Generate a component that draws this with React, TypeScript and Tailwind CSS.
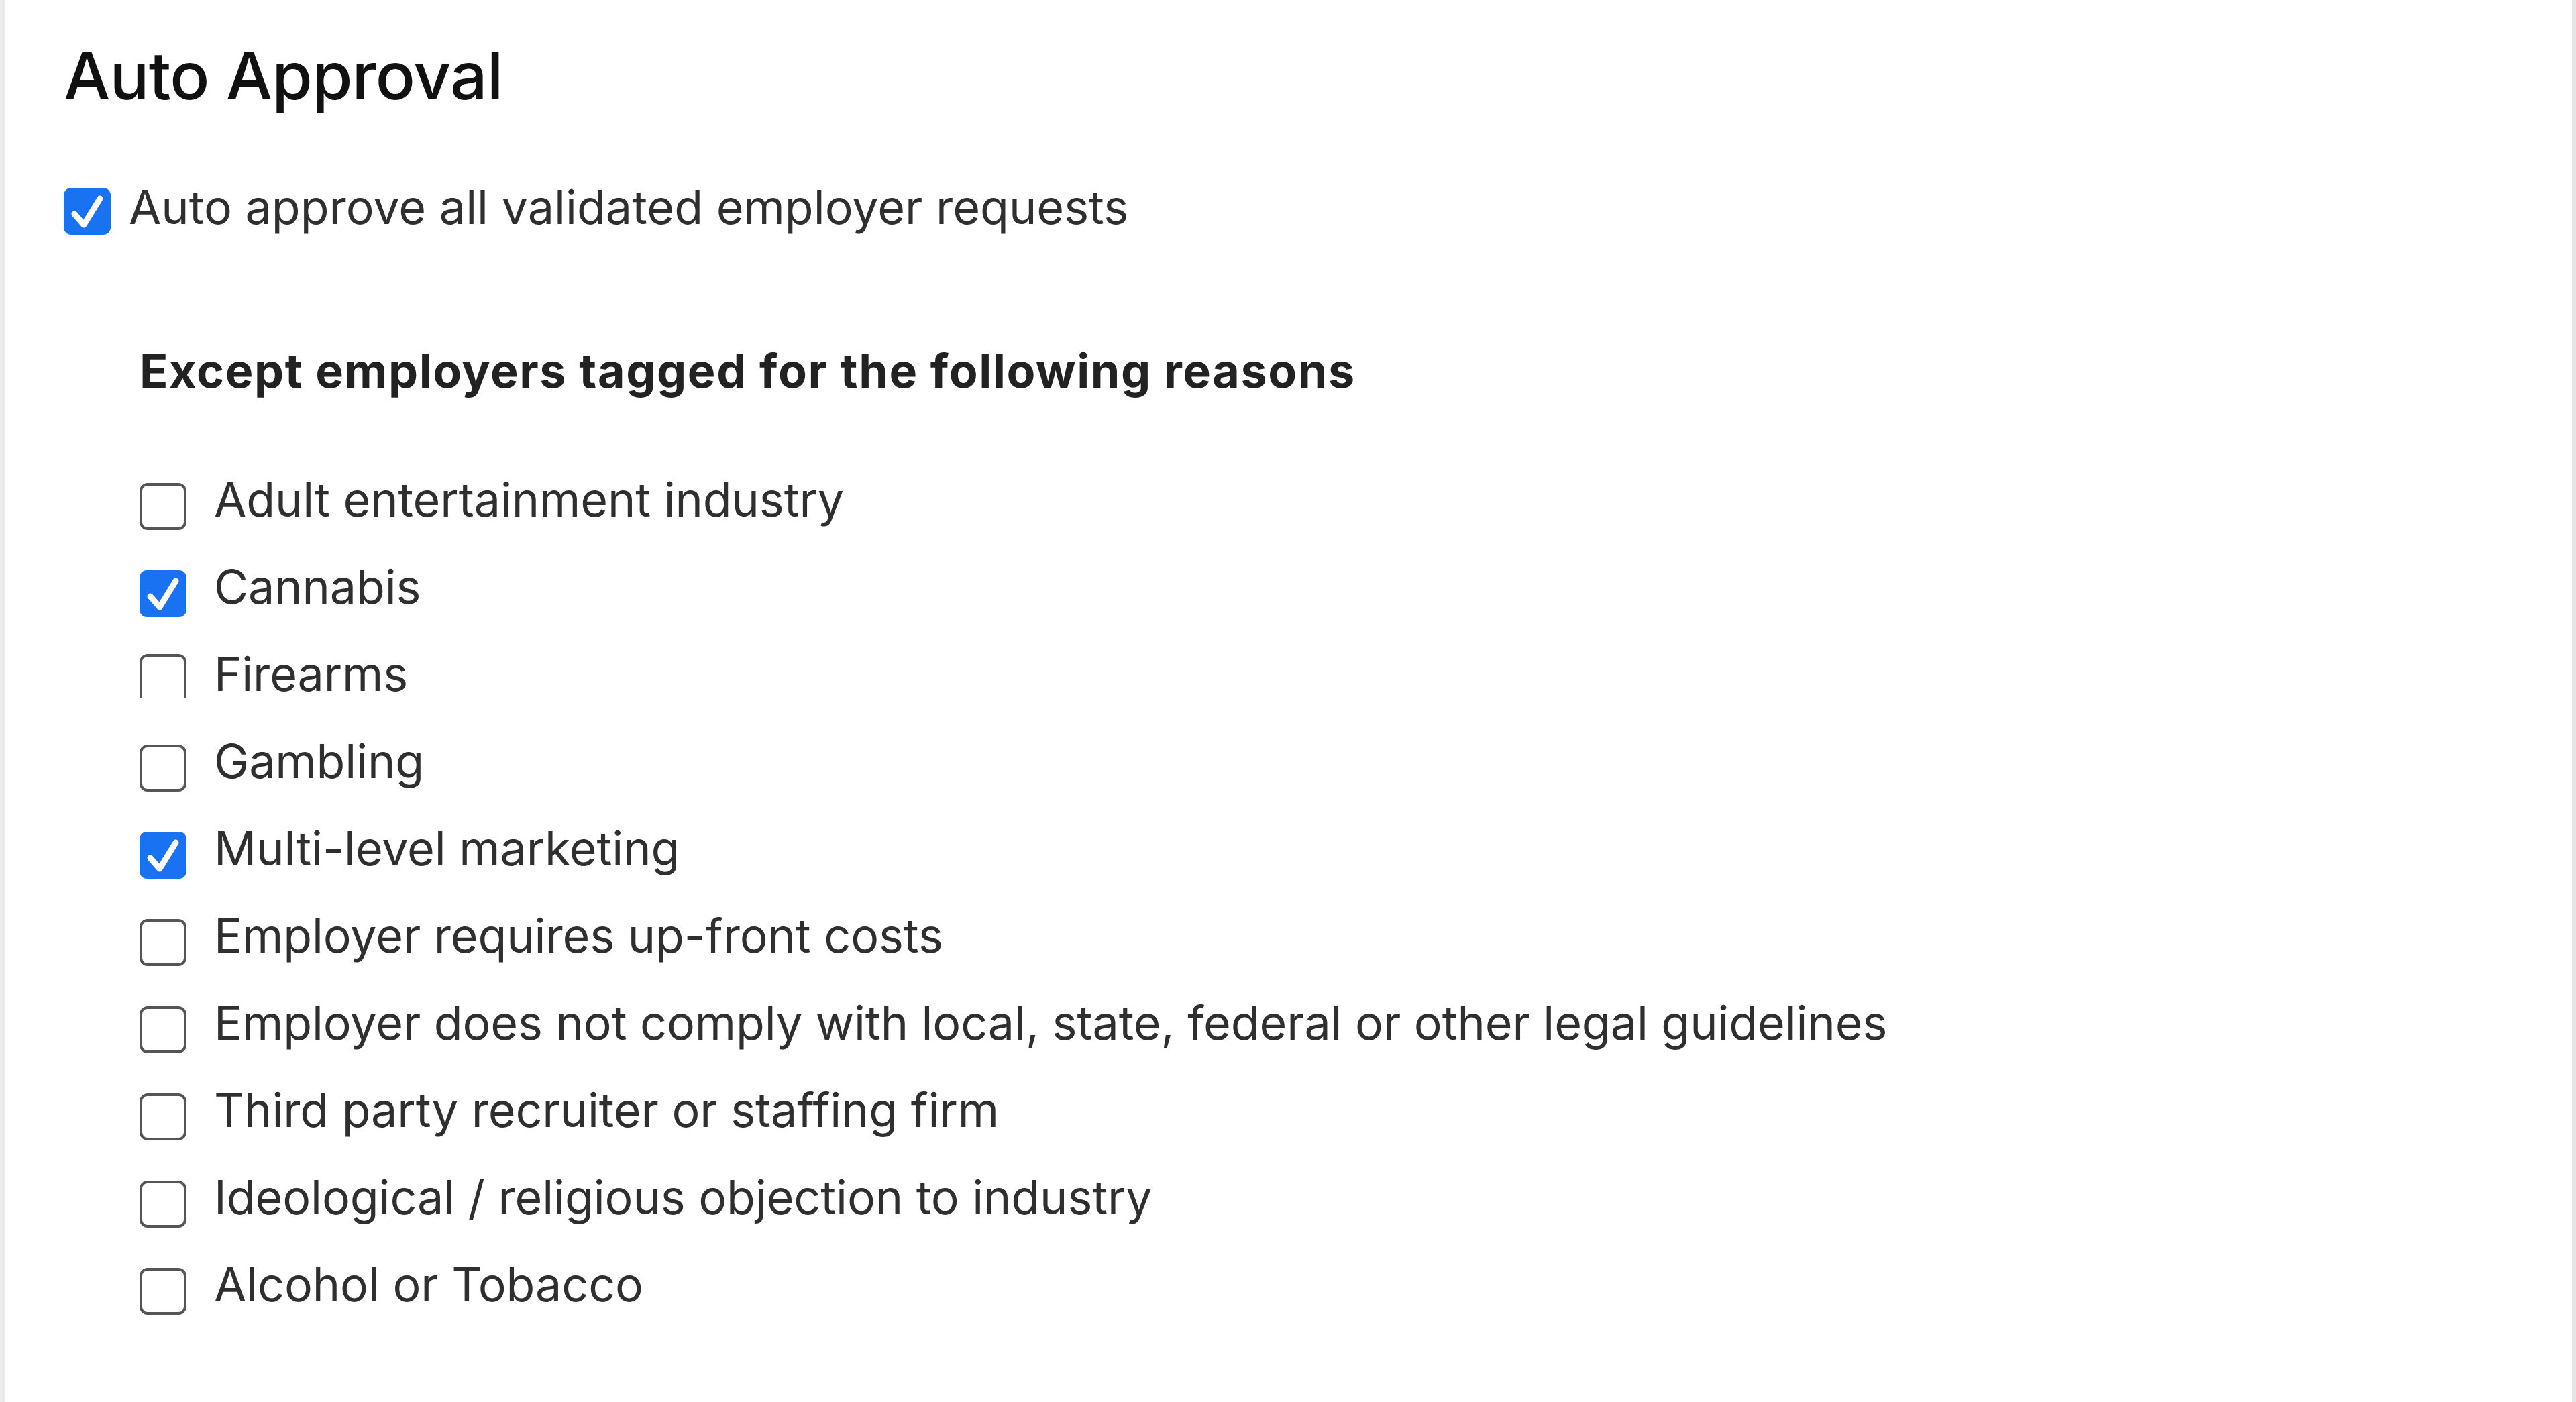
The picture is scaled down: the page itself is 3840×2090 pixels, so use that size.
import React from 'react';

type Reason = { label: string; checked?: boolean; clipped?: boolean };

const reasons: Reason[] = [
  { label: 'Adult entertainment industry' },
  { label: 'Cannabis', checked: true },
  { label: 'Firearms', clipped: true },
  { label: 'Gambling' },
  { label: 'Multi-level marketing', checked: true },
  { label: 'Employer requires up-front costs' },
  { label: 'Employer does not comply with local, state, federal or other legal guidelines' },
  { label: 'Third party recruiter or staffing firm' },
  { label: 'Ideological / religious objection to industry' },
  { label: 'Alcohol or Tobacco' },
];

function Box({ checked, clipped }: { checked?: boolean; clipped?: boolean }) {
  if (checked) {
    return (
      <span className="flex h-[70px] w-[70px] shrink-0 items-center justify-center rounded-[11px] bg-[#1872f2]">
        <svg viewBox="0 0 70 70" className="h-[70px] w-[70px]">
          <path
            d="M16 39 L30 55 L54 16"
            fill="none"
            stroke="#ffffff"
            strokeWidth="9"
            strokeLinecap="round"
            strokeLinejoin="round"
          />
        </svg>
      </span>
    );
  }
  if (clipped) {
    // the reference shows this one with its bottom edge missing
    return (
      <span className="block h-[66px] w-[70px] shrink-0 self-start rounded-t-[12px] border-[4px] border-b-0 border-[#555555] bg-white" />
    );
  }
  return (
    <span className="block h-[70px] w-[70px] shrink-0 rounded-[12px] border-[4px] border-[#555555] bg-white" />
  );
}

export default function App() {
  return (
    <div
      className="flex min-h-[2090px] w-full bg-white"
      style={{ fontFamily: 'Inter, "Liberation Sans", sans-serif' }}
    >
      <div className="w-[7px] shrink-0 bg-[#ebebeb]" />
      <div className="flex-1 pl-[88px] pt-[52px]">
        <h1 className="text-[98px] leading-[121px] font-medium tracking-[-0.9px] text-[#111111]">
          Auto Approval
        </h1>

        <label className="mt-[93px] flex items-center gap-[27px]">
          <span className="mt-[12px]">
            <Box checked />
          </span>
          <span className="text-[70px] leading-[85px] text-[#2f2f2f]">
            Auto approve all validated employer requests
          </span>
        </label>

        <div className="pl-[113px]">
          <h2 className="mt-[159px] text-[70px] leading-[85px] font-bold tracking-[1.6px] text-[#222222]">
            Except employers tagged for the following reasons
          </h2>

          <ul className="mt-[85px] flex flex-col">
            {reasons.map((r) => (
              <li key={r.label} className="flex h-[130px] items-center gap-[41px]">
                <span className={r.clipped ? 'mt-[10px] flex h-[70px] items-start' : 'mt-[20px]'}>
                  <Box checked={r.checked} clipped={r.clipped} />
                </span>
                <span className="text-[70px] leading-[130px] tracking-[-0.1px] text-[#2f2f2f]">{r.label}</span>
              </li>
            ))}
          </ul>
        </div>
      </div>
      <div className="w-[6px] shrink-0 bg-[#e4e4e4]" />
    </div>
  );
}
